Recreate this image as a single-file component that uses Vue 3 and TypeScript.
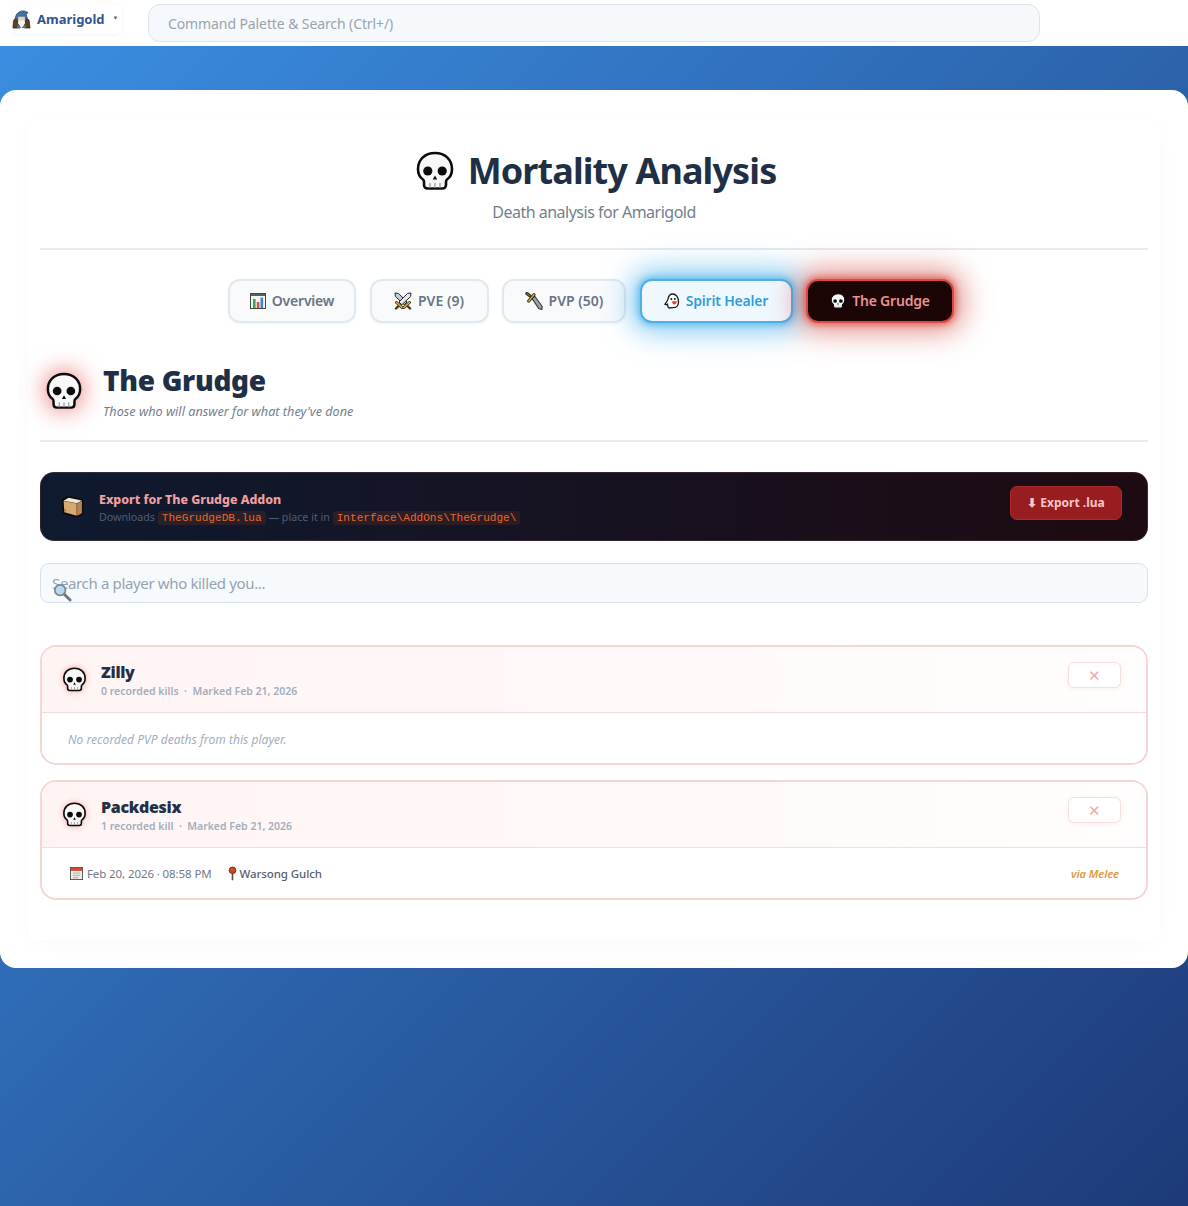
<script setup lang="ts">
type Tab = { id: string; label: string; icon: string; kind?: string };
type Kill = { when: string; zone: string; via: string };
type Grudge = { name: string; meta: string; kills: Kill[] };

const tabs: Tab[] = [
  { id: "overview", label: "Overview", icon: "#i-chart" },
  { id: "pve", label: "PVE (9)", icon: "#i-swords" },
  { id: "pvp", label: "PVP (50)", icon: "#i-dagger" },
  { id: "spirit", label: "Spirit Healer", icon: "#i-ghost", kind: "spirit" },
  { id: "grudge", label: "The Grudge", icon: "#i-skull", kind: "grudge" },
];

const grudges: Grudge[] = [
  { name: "Zilly", meta: "0 recorded kills  ·  Marked Feb 21, 2026", kills: [] },
  {
    name: "Packdesix",
    meta: "1 recorded kill  ·  Marked Feb 21, 2026",
    kills: [{ when: "Feb 20, 2026 · 08:58 PM", zone: "Warsong Gulch", via: "via Melee" }],
  },
];
</script>

<template>
  <svg class="defs" width="0" height="0" aria-hidden="true">
    <defs>
      <symbol id="i-skull" viewBox="0 0 40 40">
        <path d="M20 2C9.500 2 3 9 3 18c0 5 2 8.500 5 10.500.8.600 1 1.500 1 2.500v3c0 2 1.500 3.500 3.500 3.500h15c2 0 3.500-1.500 3.500-3.500v-3c0-1 .2-1.900 1-2.500 3-2 5-5.500 5-10.500C37 9 30.500 2 20 2z" fill="#f7f7f7" stroke="#0b0b0b" stroke-width="2.600" />
        <circle cx="12.800" cy="20" r="4.600" fill="#0b0b0b" />
        <circle cx="27.200" cy="20" r="4.600" fill="#0b0b0b" />
        <path d="M20 24.500l-2.200 4h4.400z" fill="#0b0b0b" />
        <path d="M15 32v5M20 32v5M25 32v5" stroke="#9a9a9a" stroke-width="1.300" />
      </symbol>
      <symbol id="i-chart" viewBox="0 0 16 16">
        <rect x=".5" y=".5" width="15" height="15" fill="#f4f6f4" stroke="#3f4a48" />
        <rect x="1" y="1" width="14" height="2" fill="#55635f" />
        <rect x="3" y="6" width="2.600" height="9" fill="#3aa655" />
        <rect x="6.800" y="9" width="2.600" height="6" fill="#e0532f" />
        <rect x="10.500" y="4.500" width="2.600" height="10.500" fill="#3a86d8" />
      </symbol>
      <symbol id="i-swords" viewBox="0 0 18 18">
        <path d="M1 1l3.500.4 8.500 8.600-2.800 2.800L1.400 4.500z" fill="#c5ccd2" stroke="#26262a" stroke-width="1" />
        <path d="M17 1l-3.500.4L5 10l2.800 2.800 8.800-8.300z" fill="#e4e8ec" stroke="#26262a" stroke-width="1" />
        <path d="M2.500 10.500l5.500 5M15.500 10.500l-5.500 5" stroke="#2a2418" stroke-width="3" stroke-linecap="round" />
        <path d="M2.500 10.500l5.500 5M15.500 10.500l-5.500 5" stroke="#e6b53a" stroke-width="1.500" stroke-linecap="round" />
        <path d="M4 14.500l-2 2M14 14.500l2 2" stroke="#4b2f14" stroke-width="2.400" stroke-linecap="round" />
      </symbol>
      <symbol id="i-dagger" viewBox="0 0 17 17">
        <path d="M6.500 6l2.700-2 7 9.500-.2 3-3-.8z" fill="#9ba3a8" stroke="#34363a" stroke-width="1" />
        <path d="M3.500 8.500L8.500 2.500" stroke="#26241a" stroke-width="3" stroke-linecap="round" />
        <path d="M3.500 8.500L8.500 2.500" stroke="#d6b33a" stroke-width="1.400" stroke-linecap="round" />
        <path d="M4.500 3.500L1.800 1.500" stroke="#2e2a1c" stroke-width="3" stroke-linecap="round" />
        <path d="M4.500 3.500L1.800 1.500" stroke="#7d6a30" stroke-width="1.200" stroke-linecap="round" />
      </symbol>
      <symbol id="i-ghost" viewBox="0 0 16 16">
        <path d="M8.500 1C5.500 1 4.500 3.500 4 6 3.700 8 1.500 10 1 11.500c1 .3 2 0 2.500-.3 0 1.500.5 3 1.500 3.800 1.500-.3 2.500-.3 4-.3 3 0 5.500-2 5.500-5.500 0-5-2.500-8.200-6-8.200z" fill="#fff" stroke="#1c1c1c" stroke-width="1.300" />
        <circle cx="7.300" cy="6" r="1" fill="#1c1c1c" />
        <circle cx="10.800" cy="6" r="1" fill="#1c1c1c" />
        <path d="M8 8.300h4.800c0 2-1.300 3.200-2.500 3.200S8 10.300 8 8.300z" fill="#e2403b" />
      </symbol>
      <symbol id="i-wizard" viewBox="0 0 20 20">
        <path d="M1 19l.5-7c.2-1.500 1-2.500 2-3l3.500 2 1 8z" fill="#5a4020" stroke="#1c150a" stroke-width=".7" />
        <path d="M13 11l3-2c1.200.5 2 1.500 2.200 3l.8 7h-6z" fill="#5a4020" stroke="#1c150a" stroke-width=".7" />
        <path d="M3.500 8.500C4 4 7.500 1 11.500 1c2 0 3.500.5 5.500 1.800l-2.300 1.200 1.300 4.500-1 .8H4.500z" fill="#3f74a8" stroke="#1b3047" stroke-width=".7" />
        <path d="M6.500 7h7v3.500c0 2-1.500 3-3.500 3s-3.500-1-3.500-3z" fill="#f0cfa8" />
        <path d="M7 10.500l3 .8 3-.8.800 3.500L10 18.500 6.200 14z" fill="#f2f5f8" />
        <path d="M6 14.500L10 19l4-4.500.8 4.500H5.200z" fill="#3f74a8" />
      </symbol>
      <symbol id="i-box" viewBox="0 0 22 22">
        <path d="M1.200 4.500L7 1.500 20.800 4.500 20.800 18 15.500 21 2.200 17.500z" fill="#0b0b0b" stroke="#0b0b0b" stroke-width="1" />
        <path d="M2.500 5.800L15 8.200v11.600L3.200 16.500z" fill="#d9a871" />
        <path d="M15.400 8.200l4.600-2.700V17.400l-4.600 2.400z" fill="#b9854f" />
        <path d="M2.500 5.400l4.800-2.700 12.500 2.500-4.500 2.600z" fill="#f3e7d3" />
        <path d="M3.600 13.300l1 .6v1.500l-1-.4z" fill="#c8392f" />
      </symbol>
      <symbol id="i-search" viewBox="0 0 20 20">
        <path d="M11.500 11.500l6.500 6.500" stroke="#6d7680" stroke-width="3" stroke-linecap="round" />
        <circle cx="7.500" cy="7.500" r="5.600" fill="#bcd8ee" stroke="#7b8791" stroke-width="1.800" />
      </symbol>
      <symbol id="i-calendar" viewBox="0 0 14 14">
        <rect x=".5" y=".5" width="13" height="13" fill="#f0eeea" stroke="#55504c" />
        <rect x="1" y="1" width="12" height="3.200" fill="#d8482f" />
        <path d="M3 6.500h8M3 9h8M3 11.500h6" stroke="#a9a5a0" stroke-width="1" />
      </symbol>
      <symbol id="i-pin" viewBox="0 0 10 16">
        <path d="M5 8v7.500" stroke="#555" stroke-width="1.800" />
        <circle cx="5" cy="4.500" r="3.700" fill="#d2452a" stroke="#5a2015" stroke-width=".9" />
      </symbol>
    </defs>
  </svg>

  <div class="page">
    <header class="topbar">
      <div class="profile">
        <svg class="profile-icon"><use href="#i-wizard" /></svg>
        <span class="profile-name">Amarigold</span>
        <span class="caret">▼</span>
      </div>
      <div class="palette">Command Palette &amp; Search (Ctrl+/)</div>
    </header>

    <main class="panel">
      <div class="inner">
        <div class="hero">
          <h1 class="hero-title">
            <svg class="hero-skull"><use href="#i-skull" /></svg>
            Mortality Analysis
          </h1>
          <p class="hero-sub">Death analysis for Amarigold</p>
        </div>

        <nav class="tabs">
          <button v-for="tab in tabs" :key="tab.id" class="tab" :class="[tab.id, tab.kind]">
            <svg class="tab-icon"><use :href="tab.icon" /></svg>
            <span class="tab-label">{{ tab.label }}</span>
          </button>
        </nav>

        <section class="section-head">
          <svg class="section-skull"><use href="#i-skull" /></svg>
          <div>
            <h2 class="section-title">The Grudge</h2>
            <p class="section-sub">Those who will answer for what they've done</p>
          </div>
        </section>

        <div class="export">
          <svg class="export-icon"><use href="#i-box" /></svg>
          <div class="export-text">
            <div class="export-title">Export for The Grudge Addon</div>
            <div class="export-desc">
              Downloads <code>TheGrudgeDB.lua</code> — place it in
              <code>Interface\AddOns\TheGrudge\</code>
            </div>
          </div>
          <button class="export-btn">⬇ Export .lua</button>
        </div>

        <div class="search">
          <span class="search-text">Search a player who killed you...</span>
          <svg class="search-icon"><use href="#i-search" /></svg>
        </div>

        <div class="cards">
          <article v-for="g in grudges" :key="g.name" class="card">
            <div class="card-head">
              <svg class="card-skull"><use href="#i-skull" /></svg>
              <div class="card-info">
                <div class="card-name">{{ g.name }}</div>
                <div class="card-meta">{{ g.meta }}</div>
              </div>
              <button class="card-x">✕</button>
            </div>
            <div class="card-body">
              <p v-if="!g.kills.length" class="empty">No recorded PVP deaths from this player.</p>
              <div v-for="k in g.kills" :key="k.when" class="kill">
                <svg class="kill-cal"><use href="#i-calendar" /></svg>
                <span class="kill-when">{{ k.when }}</span>
                <svg class="kill-pin"><use href="#i-pin" /></svg>
                <span class="kill-zone">{{ k.zone }}</span>
                <span class="kill-via">{{ k.via }}</span>
              </div>
            </div>
          </article>
        </div>
      </div>
    </main>
  </div>
</template>

<style>
html,
body {
  margin: 0;
  background: #1e3a78;
}
</style>

<style scoped>
.defs {
  position: absolute;
}
.page {
  min-height: 1206px;
  display: flex;
  flex-direction: column;
  font-family: "Noto Sans", "Open Sans", sans-serif;
  background: linear-gradient(135deg, #3b8fe3 0%, #1e3a78 100%);
}
.topbar {
  height: 46px;
  flex: none;
  background: #fff;
  display: flex;
  align-items: flex-start;
  padding: 4px 0 0 12px;
  box-sizing: border-box;
}
.profile {
  width: 110px;
  height: 30px;
  display: flex;
  align-items: center;
  border-radius: 8px;
  box-shadow: 0 1px 4px rgba(30, 60, 110, 0.06);
  flex: none;
}
.profile-icon {
  width: 19px;
  height: 19px;
  margin-right: 6px;
}
.profile-name {
  font-size: 13px;
  font-weight: 700;
  color: #2f5590;
}
.caret {
  font-size: 6px;
  color: #667;
  margin: 0 0 2px 8px;
}
.palette {
  margin-left: 26px;
  width: 892px;
  height: 38px;
  box-sizing: border-box;
  border: 1.5px solid #dbe4ee;
  border-radius: 12px;
  background: #f6f9fc;
  color: #9aa3ae;
  font-size: 14px;
  letter-spacing: -0.1px;
  line-height: 37px;
  padding-left: 19px;
}
.panel {
  margin-top: 44px;
  background: #fff;
  border-radius: 16px;
  padding: 30px 28px 28px;
}
.inner {
  padding: 0 12px 40px;
  border-radius: 12px;
  box-shadow: 0 4px 20px rgba(30, 60, 110, 0.025);
}
.hero {
  text-align: center;
  padding-top: 26px;
  height: 102px;
  border-bottom: 2px solid #e6ebf0;
}
.hero-title {
  margin: 0;
  padding-left: 3px;
  font-size: 36px;
  line-height: 50px;
  font-weight: 700;
  letter-spacing: -0.9px;
  color: #1f2f46;
  display: flex;
  align-items: center;
  justify-content: center;
}
.hero-skull {
  width: 40px;
  height: 40px;
  margin-right: 13px;
}
.hero-sub {
  margin: 4px 0 0;
  font-size: 16px;
  letter-spacing: -0.5px;
  line-height: 24px;
  color: #737f8d;
}
.tabs {
  display: flex;
  justify-content: center;
  gap: 13.500px;
  margin-top: 29px;
  padding-right: 6px;
}
.tab {
  height: 44px;
  padding: 0;
  border: 2px solid #e2e8f0;
  border-radius: 12px;
  background: #f8fafc;
  font-family: inherit;
  font-size: 14px;
  font-weight: 600;
  letter-spacing: -0.2px;
  color: #687585;
  display: flex;
  align-items: center;
  justify-content: center;
  gap: 6px;
  box-shadow: 0 1px 3px rgba(30, 60, 110, 0.06);
}
.tab.overview {
  width: 128px;
}
.tab.pve {
  width: 119px;
  letter-spacing: 0;
}
.tab.pvp {
  width: 124px;
  letter-spacing: 0;
}
.tab.spirit {
  width: 153px;
}
.tab.grudge {
  width: 148px;
}
.tab-label {
  margin-bottom: 2px;
}
.tab-icon {
  width: 16px;
  height: 16px;
}
.tab.pve .tab-icon,
.tab.pvp .tab-icon {
  width: 18px;
  height: 18px;
}
.tab.spirit {
  background: #f0f8ff;
  color: #2f9fd8;
  border-color: #4fb0e8;
  box-shadow: 0 0 6px 2px rgba(56, 170, 235, 0.6), 0 0 28px 9px rgba(56, 170, 235, 0.6);
}
.tab.grudge {
  background: #1c0505;
  color: #ea9292;
  border-color: #d84a44;
  box-shadow: 0 0 6px 2px rgba(215, 60, 50, 0.6), 0 0 28px 9px rgba(205, 60, 50, 0.55);
}
.section-head {
  display: flex;
  align-items: center;
  gap: 20px;
  margin-top: 30px;
  height: 89px;
  box-sizing: border-box;
  padding: 0 0 0 5px;
  border-bottom: 2px solid #e6ebf0;
}
.section-skull {
  width: 38px;
  height: 42px;
  margin-bottom: 12px;
  filter: drop-shadow(0 0 13px rgba(225, 50, 50, 0.75));
}
.section-title {
  margin: 0;
  font-size: 28px;
  line-height: 36px;
  font-weight: 900;
  letter-spacing: -0.3px;
  color: #1f2f46;
}
.section-sub {
  margin: 4px 0 12px;
  font-size: 12.700px;
  line-height: 18px;
  font-style: italic;
  color: #737f8d;
}
.export {
  margin-top: 30px;
  height: 69px;
  box-sizing: border-box;
  border: 1px solid rgba(225, 150, 150, 0.15);
  border-radius: 14px;
  background: linear-gradient(90deg, #0f1a30 0%, #1e0a12 100%);
  display: flex;
  align-items: center;
  padding: 0 25px 0 20px;
}
.export-icon {
  width: 23px;
  height: 23px;
  margin-right: 15px;
}
.export-text {
  flex: 1;
  padding-top: 4px;
}
.export-title {
  font-size: 12.400px;
  font-weight: 800;
  line-height: 17px;
  color: #f0a0a0;
}
.export-desc {
  font-size: 10.700px;
  line-height: 17px;
  color: #505d72;
  margin-top: 1px;
}
.export-desc code {
  font-family: "Liberation Mono", monospace;
  font-size: 11.100px;
  color: #e8682c;
  background: rgba(220, 90, 30, 0.12);
  border-radius: 3px;
  padding: 1px 4px;
}
.export-btn {
  width: 112px;
  height: 34px;
  margin-bottom: 8px;
  border: 1px solid #b02a2a;
  border-radius: 7px;
  background: #971d20;
  color: #fbc5c5;
  font-family: inherit;
  font-size: 12px;
  font-weight: 700;
}
.search {
  position: relative;
  margin-top: 22px;
  height: 40px;
  box-sizing: border-box;
  border: 1px solid #d6e1ec;
  border-radius: 9px;
  background: #f6fafd;
  color: #98a2af;
  font-size: 15px;
  letter-spacing: -0.35px;
  line-height: 39px;
  padding-left: 11px;
}
.search-icon {
  position: absolute;
  left: 12px;
  top: 19px;
  width: 19px;
  height: 19px;
}
.cards {
  margin-top: 42px;
  display: flex;
  flex-direction: column;
  gap: 15px;
}
.card {
  border: 2px solid #f6d5d5;
  border-radius: 16px;
  overflow: hidden;
  background: #fff;
}
.card-head {
  height: 66px;
  box-sizing: border-box;
  display: flex;
  align-items: center;
  padding: 0 25px 0 20px;
  background: linear-gradient(90deg, #fff4f4 0%, #fffdfd 100%);
  border-bottom: 1px solid #f8dcdc;
}
.card-skull {
  width: 25px;
  height: 27px;
  margin-right: 14px;
  filter: drop-shadow(0 0 3px rgba(225, 60, 60, 0.4));
}
.card-info {
  flex: 1;
  padding-top: 2px;
}
.card-name {
  font-size: 16px;
  font-weight: 900;
  letter-spacing: -0.3px;
  line-height: 20px;
  color: #232f44;
}
.card-meta {
  font-size: 10.500px;
  font-weight: 600;
  line-height: 16px;
  margin-top: 1px;
  color: #a3aebc;
  white-space: pre;
}
.card-x {
  width: 53px;
  height: 26px;
  margin-bottom: 9px;
  border: 1.500px solid #fadede;
  border-radius: 6px;
  background: #fff;
  color: #f2a8a8;
  font-size: 15px;
  font-family: inherit;
  box-shadow: 0 1px 4px rgba(220, 60, 60, 0.08);
}
.card-body {
  height: 50px;
  display: flex;
  align-items: center;
  padding: 0 26px;
}
.empty {
  margin: 2px 0 0;
  font-size: 12.100px;
  font-style: italic;
  color: #a3aebc;
}
.kill {
  flex: 1;
  display: flex;
  align-items: center;
  font-size: 11.500px;
  letter-spacing: -0.1px;
  color: #6f7a88;
}
.kill-cal {
  width: 13px;
  height: 13px;
  margin: 0 4px 0 2px;
}
.kill-pin {
  width: 9px;
  height: 15px;
  margin: 0 3px 0 16px;
}
.kill-zone {
  color: #56616f;
  font-weight: 500;
  flex: 1;
}
.kill-via {
  font-size: 11.200px;
  font-style: italic;
  font-weight: 600;
  color: #dd9a3f;
  margin-right: 1px;
}
</style>
